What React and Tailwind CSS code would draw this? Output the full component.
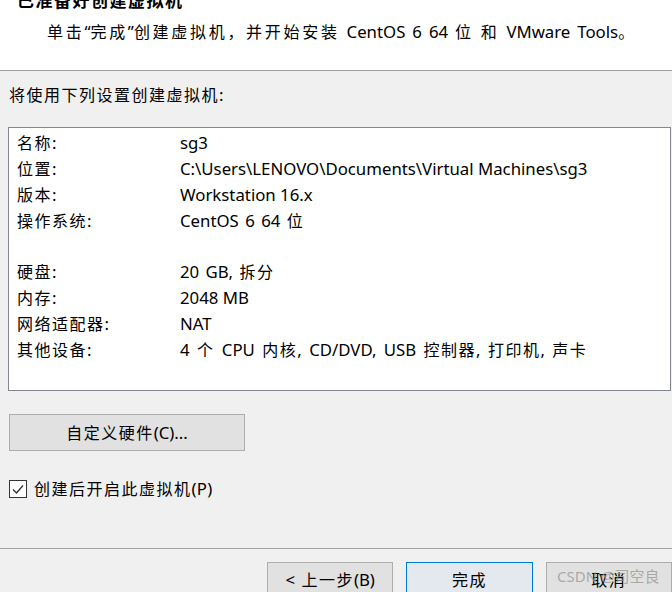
import React from 'react';

const rows = [
    ['名称:', 'sg3'],
    ['位置:', 'C:\\Users\\LENOVO\\Documents\\Virtual Machines\\sg3'],
    ['版本:', 'Workstation 16.x'],
    ['操作系统:', 'CentOS 6 64 位', '[word-spacing:2px]'],
    null,
    ['硬盘:', '20 GB, 拆分', '[word-spacing:2px]'],
    ['内存:', '2048 MB'],
    ['网络适配器:', 'NAT'],
    ['其他设备:', '4 个 CPU 内核, CD/DVD, USB 控制器, 打印机, 声卡', '[word-spacing:3px]'],
];

const font = { fontFamily: '"Noto Sans", "Noto Sans CJK SC", sans-serif' };
const CJK = /([\u3000-\u9fff\uff00-\uffef]+)/;

// CJK runs get a little extra advance, like the Windows dialog font
const T = ({ s, wide }) =>
    s.split(CJK).map((part, i) =>
        /[\u3000-\u9fff\uff00-\uffef]/.test(part) ? (
            <span key={i} className={wide ? 'text-[16px] tracking-[2.7px]' : 'text-[16px] tracking-[1.5px]'}>{part}</span>
        ) : (
            <span key={i}>{part}</span>
        )
    );

const App = () => {
    return (
        <div className="w-[672px] h-[592px] overflow-hidden flex flex-col bg-[#f0f0f0] text-black text-[16.8px]" style={font}>
            {/* header */}
            <div className="h-[71px] shrink-0 bg-white border-b border-[#a0a0a0] overflow-hidden">
                <div className="pl-[17px] -mt-[9px] text-[17px] font-bold tracking-[1.5px] leading-[20px]">已准备好创建虚拟机</div>
                <div className="pl-[47px] mt-[10px] leading-[22px] whitespace-nowrap [word-spacing:2.6px]">
                    <T wide s="单击“完成”创建虚拟机，并开始安装 CentOS 6 64 位 和 VMware Tools。" />
                </div>
            </div>

            <div className="pl-[8px] pr-[1px] pt-[12px] flex flex-col">
                <div className="pl-[1px] leading-[24px]"><T s="将使用下列设置创建虚拟机:" /></div>

                <div className="mt-[20px] h-[264px] bg-white border border-[#828790] pt-[2px] pl-[8px]">
                    {rows.map((r, i) =>
                        r ? (
                            <div key={i} className="flex h-[25.8px] items-center">
                                <span className="w-[163px] shrink-0"><T s={r[0]} /></span>
                                <span className={'whitespace-nowrap ' + (r[2] || '')}><T s={r[1]} /></span>
                            </div>
                        ) : (
                            <div key={i} className="h-[25.8px]" />
                        )
                    )}
                </div>

                <button className="mt-[23px] ml-[1px] w-[236px] h-[37px] bg-[#e1e1e1] border border-[#adadad]">
                    <T s="自定义硬件(C)..." />
                </button>

                <label className="mt-[28px] ml-[1px] flex items-center gap-[7px] leading-[20px]">
                    <span className="w-[18px] h-[18px] border border-[#333] bg-white flex items-center justify-center">
                        <svg width="14" height="14" viewBox="0 0 14 14">
                            <path d="M2 7.5 L5.5 11 L12 3.5" fill="none" stroke="#333" strokeWidth="1.4" />
                        </svg>
                    </span>
                    <span className="tracking-[0.3px]"><T s="创建后开启此虚拟机(P)" /></span>
                </label>
            </div>

            <div className="mt-[49px] border-t border-[#a0a0a0]" />

            <div className="relative flex gap-[13px] pl-[267px] pt-[13px]">
                <button className="w-[127px] h-[36px] bg-[#e1e1e1] border border-[#adadad] [word-spacing:2px]"><T s="< 上一步(B)" /></button>
                <button className="w-[127px] h-[36px] bg-[#e3e9ef] border border-[#0078d7]"><T s="完成" /></button>
                <button className="w-[127px] h-[36px] bg-[#e1e1e1] border border-[#adadad]"><T s="取消" /></button>
                <span className="absolute left-[557px] top-[17px] text-[15px] text-[#999]/80 leading-[20px] pointer-events-none">CSDN @司空良</span>
            </div>
        </div>
    );
};

export default App;
